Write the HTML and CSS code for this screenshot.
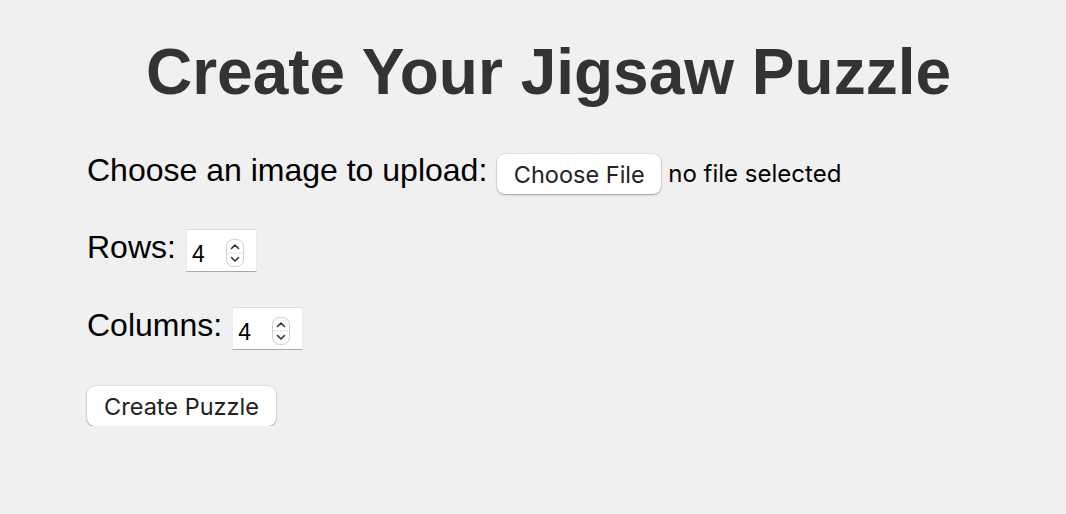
FILE: index.html
```html
<!DOCTYPE html>
<html lang="en">
<head>
<meta charset="utf-8">
<title>Create Your Jigsaw Puzzle</title>
<link rel="stylesheet" href="styles.css">
</head>
<body>
<main class="page">
  <h1 class="title">Create Your Jigsaw Puzzle</h1>
  <form class="form">
    <div class="row row-file">
      <span class="label">Choose an image to upload:</span>
      <span class="btn file-btn">Choose File</span>
      <span class="file-status">no file selected</span>
    </div>
    <div class="row row-num">
      <span class="label">Rows:</span>
      <div class="num-input">
        <span class="num-value">4</span>
        <span class="spinner">
          <svg width="18" height="28" viewBox="0 0 18 28">
            <rect x="0.5" y="0.5" width="17" height="27" rx="7" fill="#fff" stroke="#cfcfcf"/>
            <line x1="1" y1="14" x2="17" y2="14" stroke="#e2e2e2"/>
            <path d="M5.5 9.5 L9 6 L12.5 9.5" fill="none" stroke="#333" stroke-width="1.6" stroke-linecap="round" stroke-linejoin="round"/>
            <path d="M5.5 18.5 L9 22 L12.5 18.5" fill="none" stroke="#333" stroke-width="1.6" stroke-linecap="round" stroke-linejoin="round"/>
          </svg>
        </span>
      </div>
    </div>
    <div class="row row-num">
      <span class="label">Columns:</span>
      <div class="num-input">
        <span class="num-value">4</span>
        <span class="spinner">
          <svg width="18" height="28" viewBox="0 0 18 28">
            <rect x="0.5" y="0.5" width="17" height="27" rx="7" fill="#fff" stroke="#cfcfcf"/>
            <line x1="1" y1="14" x2="17" y2="14" stroke="#e2e2e2"/>
            <path d="M5.5 9.5 L9 6 L12.5 9.5" fill="none" stroke="#333" stroke-width="1.6" stroke-linecap="round" stroke-linejoin="round"/>
            <path d="M5.5 18.5 L9 22 L12.5 18.5" fill="none" stroke="#333" stroke-width="1.6" stroke-linecap="round" stroke-linejoin="round"/>
          </svg>
        </span>
      </div>
    </div>
    <div class="row row-submit">
      <span class="btn submit-btn">Create Puzzle</span>
    </div>
  </form>
</main>
</body>
</html>
```
FILE: styles.css
```css
html, body {
  margin: 0;
  padding: 0;
  background: #f0f0f0;
}

body {
  font-family: "Liberation Sans", Arial, sans-serif;
  color: #000;
}

.page {
  padding-top: 35px;
}

.title {
  margin: 0;
  padding-left: 31px;
  font-size: 64px;
  line-height: 74px;
  font-weight: bold;
  color: #333;
  text-align: center;
}

.form {
  display: flex;
  flex-direction: column;
  gap: 35px;
  padding-left: 87px;
  margin-top: 45px;
}

.row {
  display: flex;
  align-items: flex-start;
}

.label {
  font-size: 32px;
  line-height: 32px;
  white-space: nowrap;
}

.row-num .label {
  margin-top: 2px;
}

.row-submit {
  margin-top: 1px;
}

.btn {
  display: inline-flex;
  align-items: center;
  justify-content: center;
  height: 40px;
  box-sizing: border-box;
  background: #fff;
  border-radius: 8px;
  box-shadow: 0 0 0 0.5px rgba(0, 0, 0, 0.12), 0 1px 2px rgba(0, 0, 0, 0.3);
  font-family: Inter, "Noto Sans", sans-serif;
  font-size: 23.5px;
  color: #222;
  white-space: nowrap;
}

.file-btn {
  width: 164px;
  margin-left: 10px;
}

.file-status {
  font-family: Inter, "Noto Sans", sans-serif;
  font-size: 24px;
  line-height: 40px;
  margin-left: 7px;
  color: #000;
}

.submit-btn {
  width: 189px;
}

.num-input {
  display: flex;
  align-items: flex-start;
  box-sizing: border-box;
  width: 71px;
  height: 43px;
  margin-left: 10px;
  background: #fff;
  border-top: 1px solid #dcdcdc;
  border-left: 1px solid #ececec;
  border-right: 1px solid #ececec;
  border-bottom: 1px solid #a9a9a9;
}

.num-value {
  font-size: 23px;
  line-height: 23px;
  margin-top: 13px;
  margin-left: 5px;
  width: 34px;
}

.spinner {
  display: block;
  margin-top: 9px;
  height: 28px;
}

.spinner svg {
  display: block;
}
```
